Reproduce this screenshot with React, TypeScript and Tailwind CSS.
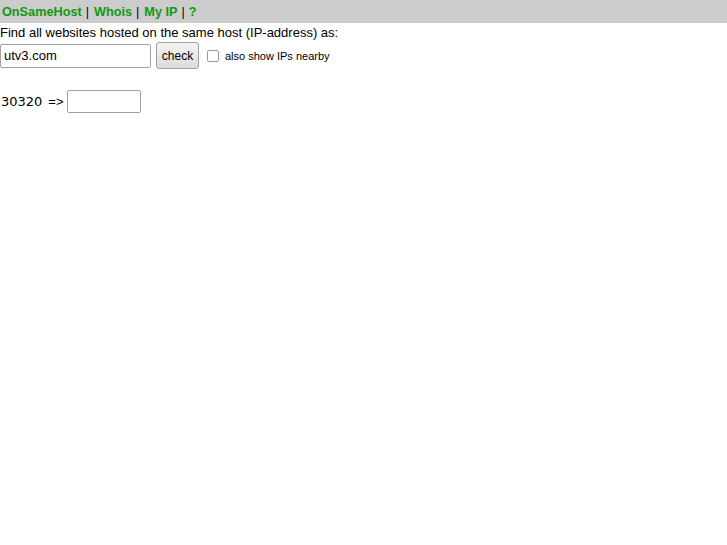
import React from "react";

export default function App() {
  return (
    <div className="min-h-[545px] bg-white text-black text-[13px] leading-[16px]" style={{ fontFamily: '"Liberation Sans", Arial, sans-serif' }}>
      <div className="h-[23px] bg-[#cccccc] flex items-center px-[2px] font-bold text-[12.7px]">
        <a className="text-[#119911]">OnSameHost</a>
        <span className="ml-[4px] mr-[5px] font-normal">|</span>
        <a className="text-[#119911]">Whois</a>
        <span className="ml-[4px] mr-[5px] font-normal">|</span>
        <a className="text-[#119911]">My IP</a>
        <span className="ml-[4px] mr-[4px] font-normal">|</span>
        <a className="text-[#119911]">?</a>
      </div>
      <div className="mt-[2px] h-[16px]">Find all websites hosted on the same host (IP-address) as:</div>
      <div className="flex items-center h-[29px]">
        <input
          defaultValue="utv3.com"
          className="w-[151px] h-[24px] border border-[#a0a0a0] rounded-[2px] px-[3px] text-[13px] bg-white outline-none"
          style={{ fontFamily: '"Liberation Sans", Arial, sans-serif' }}
        />
        <button
          className="ml-[5px] w-[43px] h-[27px] border border-[#a0a0a0] rounded-[3px] bg-gradient-to-b from-[#f4f4f4] to-[#dcdcdc] text-[12px]"
          style={{ fontFamily: '"Liberation Sans", Arial, sans-serif' }}
        >
          check
        </button>
        <span className="ml-[8px] w-[12px] h-[12px] border border-[#9a9a9a] rounded-[2px] bg-white inline-block" />
        <span className="ml-[6px] text-[11px]">also show IPs nearby</span>
      </div>
      <div className="flex items-center mt-[20px] h-[23px]">
        <span className="ml-[1px] text-[13px]" style={{ fontFamily: '"DejaVu Sans", sans-serif' }}>30320</span>
        <span className="ml-[6px] text-[13px]">=&gt;</span>
        <input className="ml-[3px] w-[74px] h-[23px] border border-[#a0a0a0] rounded-[2px] bg-white outline-none" />
      </div>
    </div>
  );
}
